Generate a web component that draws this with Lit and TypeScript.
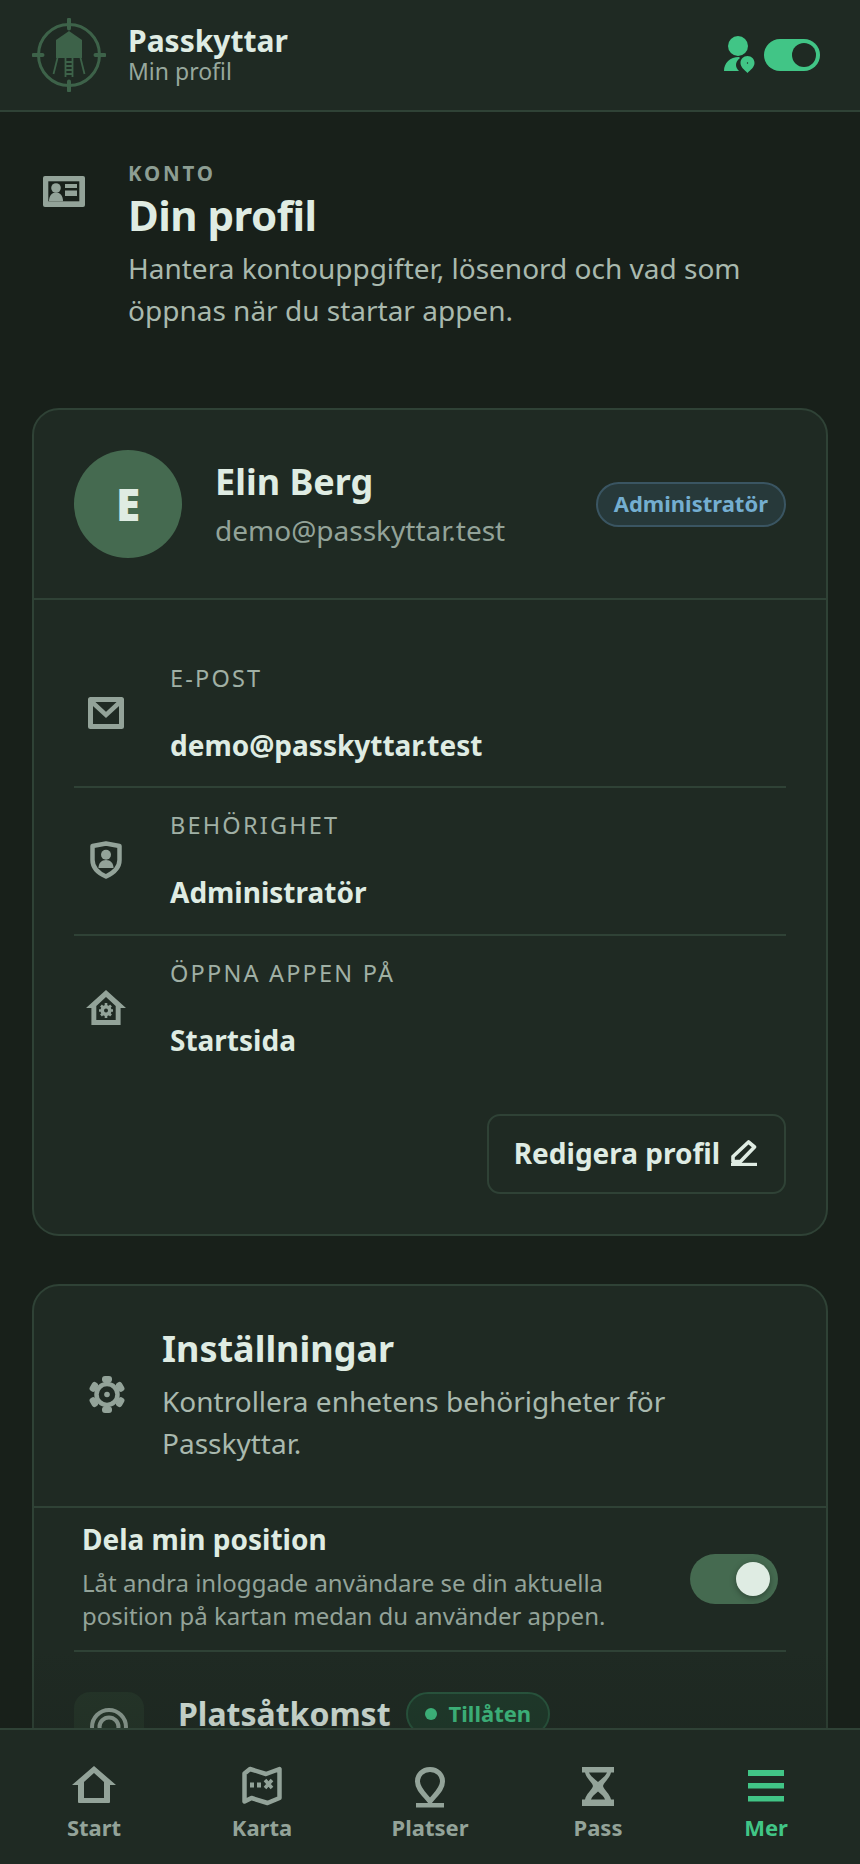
import { LitElement, html, css } from "lit";
import { customElement } from "lit/decorators.js";

@customElement("app-root")
export class AppRoot extends LitElement {
  static styles = css`
    :host {
      display: block;
      position: relative;
      height: 1864px;
      overflow: hidden;
      background: #18201a;
      color: #dfece3;
      font-family: "Noto Sans", sans-serif;
    }
    svg { display: block; flex: none; }
    .topbar {
      height: 112px;
      box-sizing: border-box;
      border-bottom: 2px solid #2f4236;
      background: #1f2a23;
      padding: 0 40px 0 32px;
      display: flex;
      align-items: center;
    }
    .logo { margin-right: 22px; color: #3d6249; }
    .brand { flex: 1; display: flex; flex-direction: column; padding-bottom: 2px; }
    .brand b { font-size: 30px; line-height: 34px; font-weight: 700; }
    .brand span { font-size: 23px; line-height: 26px; color: #97a89d; }
    .top-actions { display: flex; align-items: center; gap: 8px; }
    .person { color: #41c586; }
    .mini-toggle {
      width: 56px; height: 32px; border-radius: 16px; background: #41c586;
      display: flex; align-items: center; justify-content: flex-end; padding-right: 4px; box-sizing: border-box;
    }
    .mini-toggle i { width: 24px; height: 24px; border-radius: 50%; background: #1f2a23; display: block; }

    .intro { padding: 49px 32px 0 43px; display: flex; gap: 43px; height: 296px; box-sizing: border-box; }
    .intro svg { margin-top: 15px; color: #93a399; }
    .eyebrow { font-size: 20.5px; line-height: 24px; font-weight: 700; letter-spacing: 2.8px; color: #8d9e93; margin-bottom: 1px; }
    h1 { margin: 0; font-size: 42px; line-height: 58px; font-weight: 700; letter-spacing: -0.5px; }
    .intro p { margin: 3px 0 0; font-size: 28px; line-height: 42px; color: #a9b9ae; width: 650px; }

    .card {
      margin: 0 32px 48px;
      border: 2px solid #2f4236;
      border-radius: 27px;
      background: #1f2a23;
      box-sizing: border-box;
    }
    .profile-head {
      display: flex; align-items: center; gap: 33px;
      padding: 0 40px; height: 190px; box-sizing: border-box;
      border-bottom: 2px solid #2f4236;
    }
    .avatar {
      width: 108px; height: 108px; border-radius: 50%; background: #456a50;
      display: flex; align-items: center; justify-content: center;
      font-size: 44px; font-weight: 900; flex: none;
    }
    .who { flex: 1; }
    .who b { display: block; font-size: 36px; line-height: 50px; font-weight: 700; }
    .who span { display: block; font-size: 28px; line-height: 42px; color: #93a399; margin-top: 2px; }
    .role {
      height: 45px; box-sizing: border-box; padding: 0 16px 2px; border-radius: 23px;
      border: 2px solid #3a5562; background: #27393a; color: #74aed0;
      font-size: 22px; font-weight: 700; display: flex; align-items: center;
    }
    .rows { padding: 40px 40px 0; }
    .row {
      display: flex; align-items: center; box-sizing: border-box;
      border-bottom: 2px solid #2f4236; height: 148px;
    }
    .row:last-child { border-bottom: 0; }
    .row:first-child .txt { margin-top: 3px; }
    .row:nth-child(2) .ic svg { margin-top: -2px; }
    .row:last-child .txt { margin-top: -2px; }
    .row:last-child .ic svg { margin-top: -6px; }
    .row .ic { width: 64px; margin-right: 32px; display: flex; justify-content: center; color: #93a399; }
    .row small { display: block; font-size: 23.5px; line-height: 30px; letter-spacing: 2.2px; color: #a0b0a5; margin-bottom: 31px; }
    .row b { display: block; font-size: 28px; line-height: 42px; font-weight: 700; }
    .actions { padding: 30px 40px 40px; display: flex; justify-content: flex-end; }
    .btn {
      height: 80px; padding: 0 27px 3px 25px; box-sizing: border-box;
      border: 2px solid #2f4236; border-radius: 13px;
      display: flex; align-items: center; gap: 11px;
      font-size: 28px; font-weight: 700;
    }
    .set-head {
      display: flex; align-items: center; padding: 38px 40px 42px; gap: 22px;
      border-bottom: 2px solid #2f4236; box-sizing: border-box;
    }
    .set-head .ic { width: 66px; display: flex; justify-content: center; color: #93a399; flex: none; }
    .set-head b { display: block; font-size: 36px; line-height: 50px; font-weight: 700; }
    .set-head p { margin: 6px 0 0; font-size: 28px; line-height: 42px; color: #a9b9ae; }
    .share {
      margin: 0 40px; padding: 12px 8px 0; height: 144px; box-sizing: border-box;
      border-bottom: 2px solid #2f4236;
      display: flex; align-items: flex-start; justify-content: space-between;
    }
    .share b { display: block; font-size: 28px; line-height: 38px; font-weight: 700; }
    .share p { margin: 8px 0 0; font-size: 24px; line-height: 33px; color: #93a399; width: 540px; }
    .toggle {
      width: 88px; height: 50px; border-radius: 25px; background: #456a50; margin-top: 34px;
      display: flex; align-items: center; justify-content: flex-end; padding-right: 8px; box-sizing: border-box; flex: none;
    }
    .toggle i { width: 34px; height: 34px; border-radius: 50%; background: #dfece3; display: block; box-shadow: 0 2px 6px rgba(0,0,0,.35); }
    .access { margin: 0 40px; padding-top: 40px; display: flex; gap: 34px; }
    .iconbox { width: 70px; height: 70px; border-radius: 16px; background: #253529; display: flex; align-items: center; justify-content: center; color: #93a399; flex: none; }
    .access-title { display: flex; align-items: center; gap: 15px; height: 44px; }
    .access-title b { font-size: 32px; font-weight: 700; margin-top: -2px; }
    .ok {
      height: 44px; box-sizing: border-box; border: 2px solid #29573f; background: #1f3a2b; border-radius: 22px;
      padding: 0 17px 2px; display: flex; align-items: center; gap: 12px; color: #41c586; font-size: 22px; font-weight: 700;
    }
    .ok i { width: 12px; height: 12px; border-radius: 50%; background: #41c586; display: block; margin-top: 2px; }

    .fade {
      position: absolute; left: 0; right: 0; bottom: 136px; height: 80px;
      background: linear-gradient(to bottom, rgba(24,32,26,0), rgba(24,32,26,.18));
      pointer-events: none;
    }
    nav {
      position: absolute; left: 0; right: 0; bottom: 0; height: 136px; box-sizing: border-box;
      background: #1f2a23; border-top: 2px solid #2f4236;
      display: grid; grid-template-columns: repeat(5, 168px); padding: 36px 10px 0;
      color: #93a399;
    }
    nav div { display: flex; flex-direction: column; align-items: center; font-size: 22px; line-height: 30px; font-weight: 700; }
    nav svg { margin-bottom: 4px; }
    nav .on { color: #41c586; }
  `;

  render() {
    return html`
      <header class="topbar">
        <svg class="logo" width="74" height="74" viewBox="0 0 74 74">
          <circle cx="37" cy="37" r="30.500" fill="none" stroke="currentColor" stroke-width="3"/>
          <path d="M37 1.500v9M37 63.500v9M1.500 37h9M63.500 37h9" stroke="currentColor" stroke-width="4" stroke-linecap="round"/>
          <path d="M37 13 50 22v18H24V22Z" fill="currentColor"/>
          <path d="M25.500 40 21.500 56M48.500 40l4 16M33.500 40v19M40.500 40v19M33.500 44h7M33.500 48h7M33.500 52h7M33.500 56h7" fill="none" stroke="currentColor" stroke-width="1.800"/>
        </svg>
        <div class="brand"><b>Passkyttar</b><span>Min profil</span></div>
        <div class="top-actions">
          <svg class="person" width="32" height="38" viewBox="0 0 32 38">
            <circle cx="14" cy="10" r="10" fill="currentColor"/>
            <path d="M0 35c0-8 6-14 15-14l1 1c-3 2-4 5-4 7 0 2 1 4 3 6Z" fill="currentColor"/>
            <path d="M23.500 20c4 0 7 3 7 7 0 4-4 7-7 10-3-3-7-6-7-10 0-4 3-7 7-7Z" fill="currentColor"/>
            <circle cx="23.500" cy="27" r=".7" fill="#1f2a23"/>
          </svg>
          <div class="mini-toggle"><i></i></div>
        </div>
      </header>

      <section class="intro">
        <svg width="42" height="31" viewBox="0 0 42 31">
          <rect width="42" height="31" rx="2" fill="currentColor"/>
          <rect x="5.300" y="5.300" width="31" height="20" fill="#18201a"/>
          <circle cx="13" cy="12" r="4.800" fill="currentColor"/>
          <path d="M6 25.300c0-6 3-8.800 7-8.800s7 2.800 7 8.800Z" fill="currentColor"/>
          <path d="M22 8h12v4H22ZM22 14.500h12V20H22Z" fill="currentColor"/>
        </svg>
        <div>
          <div class="eyebrow">KONTO</div>
          <h1>Din profil</h1>
          <p>Hantera kontouppgifter, lösenord och vad som öppnas när du startar appen.</p>
        </div>
      </section>

      <section class="card">
        <div class="profile-head">
          <div class="avatar">E</div>
          <div class="who"><b>Elin Berg</b><span>demo@passkyttar.test</span></div>
          <div class="role">Administratör</div>
        </div>
        <div class="rows">
          <div class="row">
            <div class="ic"><svg width="36" height="32" viewBox="0 0 36 32"><path d="M2.500 2.500h31v27h-31Z" fill="none" stroke="currentColor" stroke-width="5" stroke-linejoin="round"/><path d="M4 5l14 13L32 5" fill="none" stroke="currentColor" stroke-width="4.500"/></svg></div>
            <div class="txt"><small>E-POST</small><b>demo@passkyttar.test</b></div>
          </div>
          <div class="row">
            <div class="ic"><svg width="32" height="38" viewBox="0 0 32 38"><path d="M16 2.500 29.500 5v14c0 8-6 13-13.500 16.500C8 32 2.500 27 2.500 19V5Z" fill="none" stroke="currentColor" stroke-width="4.500" stroke-linejoin="round"/><circle cx="16" cy="13.700" r="5" fill="currentColor"/><path d="M8.500 27c0-5 3-8 7.500-8s7.500 3 7.500 8Z" fill="currentColor"/></svg></div>
            <div class="txt"><small>BEHÖRIGHET</small><b>Administratör</b></div>
          </div>
          <div class="row">
            <div class="ic"><svg width="40" height="35" viewBox="0 0 40 35"><path d="M20 0 40 18h-5.400v17H5.400V18H0Zm0 7-9.700 9v14h19.400V16Z" fill="currentColor" fill-rule="evenodd"/><circle cx="20" cy="20.500" r="5.500" fill="currentColor"/><path d="M20 13v15M13 20.500h14M15 15.500l10 10M25 15.500l-10 10" stroke="currentColor" stroke-width="2.600"/><circle cx="20" cy="20.500" r="2" fill="#1f2a23"/></svg></div>
            <div class="txt"><small>ÖPPNA APPEN PÅ</small><b>Startsida</b></div>
          </div>
        </div>
        <div class="actions">
          <div class="btn">Redigera profil
            <svg width="26" height="26" viewBox="0 0 26 26"><path d="M0 24.500h26" stroke="currentColor" stroke-width="3.400"/><path d="M2 21.500v-5L17.500 2l6 5-14 14.500Z" fill="none" stroke="currentColor" stroke-width="3.600" stroke-linejoin="round"/></svg>
          </div>
        </div>
      </section>

      <section class="card">
        <div class="set-head">
          <div class="ic"><svg width="36" height="37" viewBox="0 0 36 37"><circle cx="18" cy="18.500" r="10.500" fill="none" stroke="currentColor" stroke-width="4.500"/><g fill="currentColor"><rect x="13" y="0" width="10" height="6.500" rx="3"/><rect x="13" y="0" width="10" height="6.500" rx="3" transform="rotate(60 18 18.500)"/><rect x="13" y="0" width="10" height="6.500" rx="3" transform="rotate(120 18 18.500)"/><rect x="13" y="0" width="10" height="6.500" rx="3" transform="rotate(180 18 18.500)"/><rect x="13" y="0" width="10" height="6.500" rx="3" transform="rotate(240 18 18.500)"/><rect x="13" y="0" width="10" height="6.500" rx="3" transform="rotate(300 18 18.500)"/><circle cx="18" cy="18.500" r="2.800"/></g></svg></div>
          <div><b>Inställningar</b><p>Kontrollera enhetens behörigheter för Passkyttar.</p></div>
        </div>
        <div class="share">
          <div><b>Dela min position</b><p>Låt andra inloggade användare se din aktuella position på kartan medan du använder appen.</p></div>
          <div class="toggle"><i></i></div>
        </div>
        <div class="access">
          <div class="iconbox"><svg width="38" height="38" viewBox="0 0 38 38"><circle cx="19" cy="19" r="17" fill="none" stroke="currentColor" stroke-width="4"/><circle cx="19" cy="19" r="9.500" fill="none" stroke="currentColor" stroke-width="4"/></svg></div>
          <div class="access-title"><b>Platsåtkomst</b><div class="ok"><i></i>Tillåten</div></div>
        </div>
      </section>

      <div class="fade"></div>
      <nav>
        <div><svg width="44" height="42" viewBox="0 0 44 42"><path d="M22 0 44 19h-6v17q0 1-1 1H7q-1 0-1-1V19H0Zm0 7L12 16v16h20V16Z" fill="currentColor" fill-rule="evenodd"/></svg>Start</div>
        <div><svg width="40" height="42" viewBox="0 0 40 42"><path d="M2.500 7.500 8 3l16 5 13.500-5v29l-12 5-16-5-7 3.500Z" fill="none" stroke="currentColor" stroke-width="4.500" stroke-linejoin="round"/><path d="M8 16.500h4v5H8ZM15 16.500h4v5h-4Z" fill="currentColor"/><path d="M23 14l7 8M30 14l-7 8" stroke="currentColor" stroke-width="3.500"/></svg>Karta</div>
        <div><svg width="32" height="42" viewBox="0 0 32 42"><path d="M16 3.500c7.500 0 12.500 5.500 12.500 12 0 7-6 12-12.500 20-6.500-8-12.500-13-12.500-20 0-6.500 5-12 12.500-12Z" fill="none" stroke="currentColor" stroke-width="5" stroke-linejoin="round"/><path d="M2 37h28v4.500H2Z" fill="currentColor"/></svg>Platser</div>
        <div><svg width="32" height="42" viewBox="0 0 32 42"><path d="M0 1h32v5.500h-3C28 12 22 16 21 20c1 4 7 8 8 13.500h3V40H0v-6.500h3C4 28 10 24 11 20 10 16 4 12 3 6.500H0Zm7 5.500c1 3 5 6 9 9.500 4-3.500 8-6.500 9-9.500ZM16 25.500c-3 2.500-6 5-7 8h14c-1-3-4-5.500-7-8Z" fill="currentColor" fill-rule="evenodd"/></svg>Pass</div>
        <div class="on"><svg width="36" height="42" viewBox="0 0 36 42"><path d="M0 4h36v6H0ZM0 17h36v5.500H0ZM0 30h36v5.500H0Z" fill="currentColor"/></svg>Mer</div>
      </nav>
    `;
  }
}
